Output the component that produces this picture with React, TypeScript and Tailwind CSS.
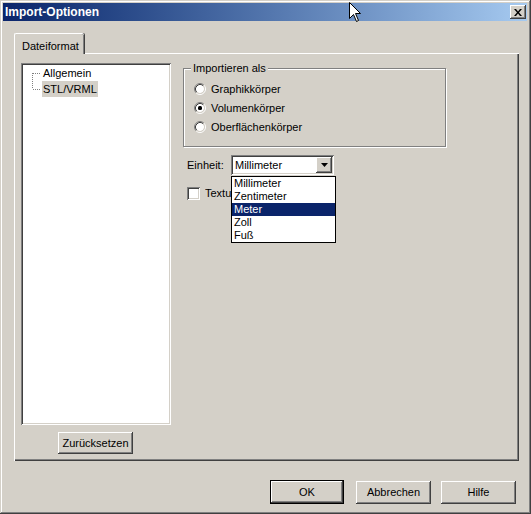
import React from 'react'

const raised =
  'shadow-[inset_-1px_-1px_#404040,inset_1px_1px_#ffffff,inset_-2px_-2px_#808080,inset_2px_2px_#d4d0c8]'
const sunken =
  'shadow-[inset_1px_1px_#808080,inset_-1px_-1px_#ffffff,inset_2px_2px_#404040,inset_-2px_-2px_#d4d0c8]'

function Radio({ checked }: { checked?: boolean }) {
  return (
    <svg width="12" height="12" viewBox="0 0 12 12" className="shrink-0">
      <circle cx="6" cy="6" r="4" fill="#ffffff" />
      <path d="M2.11 9.89 A5.5 5.5 0 0 1 9.89 2.11" stroke="#808080" fill="none" />
      <path d="M9.89 2.11 A5.5 5.5 0 0 1 2.11 9.89" stroke="#ffffff" fill="none" />
      <path d="M2.82 9.18 A4.5 4.5 0 0 1 9.18 2.82" stroke="#404040" fill="none" />
      <path d="M9.18 2.82 A4.5 4.5 0 0 1 2.82 9.18" stroke="#d4d0c8" fill="none" />
      {checked && <rect x="4" y="4" width="4" height="4" rx="1.5" fill="#000000" />}
    </svg>
  )
}

function Button({ label, isDefault, className = '' }: { label: string; isDefault?: boolean; className?: string }) {
  return (
    <div className={`${isDefault ? 'border border-black' : ''} ${className}`}>
      <div className={`h-full w-full flex items-center justify-center bg-[#d4d0c8] ${raised}`}>{label}</div>
    </div>
  )
}

const units = ['Millimeter', 'Zentimeter', 'Meter', 'Zoll', 'Fuß']

export default function App() {
  return (
    <div
      className={`relative w-[531px] h-[514px] bg-[#d4d0c8] pl-[3px] pt-[3px] pr-[4px] pb-[3px] flex flex-col text-[11px] text-black font-['Liberation_Sans',Arial,sans-serif] shadow-[inset_-1px_-1px_#404040,inset_1px_1px_#d4d0c8,inset_-2px_-2px_#808080,inset_2px_2px_#ffffff]`}
    >
      {/* title bar */}
      <div className="h-[18px] flex items-center justify-between bg-gradient-to-r from-[#0a246a] to-[#a6caf0] pl-[2px] pr-[1px]">
        <span className="text-white font-bold text-[12px] leading-none">Import-Optionen</span>
        <div className={`w-[16px] h-[14px] bg-[#d4d0c8] flex items-center justify-center ${raised}`}>
          <svg width="8" height="7" viewBox="0 0 8 7">
            <path d="M0 0h2l2 2.5L6 0h2L5 3.5 8 7H6L4 4.5 2 7H0l3-3.5z" fill="#000000" />
          </svg>
        </div>
      </div>

      {/* tab */}
      <div className="ml-[11px] mt-[12px] flex">
        <div className="relative z-10 -mb-[1px] w-[70px] h-[21px] bg-[#d4d0c8] rounded-t-[2px] border-l border-t border-white shadow-[inset_-1px_0_#808080,1px_0_#404040] pl-[7px] pt-[4px]">
          Dateiformat
        </div>
      </div>

      {/* panel */}
      <div className="ml-[11px] w-[505px] h-[408px] flex shadow-[inset_1px_1px_#ffffff,inset_-1px_-1px_#404040,inset_-2px_-2px_#808080]">
        <div className="pl-[7px] pt-[10px] flex flex-col">
          <div className={`w-[150px] h-[362px] bg-white pt-[2px] pl-[11px] flex ${sunken}`}>
            <svg width="9" height="32" viewBox="0 0 9 32" className="shrink-0">
              <path d="M0.5 8 V24" stroke="#808080" strokeDasharray="1 1" />
              <path d="M1 8.5 H9 M1 24.5 H9" stroke="#808080" strokeDasharray="1 1" />
            </svg>
            <div className="flex flex-col ml-[1px]">
              <div className="h-[16px] leading-[16px] px-[1px]">Allgemein</div>
              <div className="h-[16px] leading-[16px] px-[1px] bg-[#d4d0c8]">STL/VRML</div>
            </div>
          </div>
          <Button label="Zurücksetzen" className="mt-[7px] ml-[37px] w-[75px] h-[22px]" />
        </div>

        <div className="ml-[12px] pt-[9px] flex flex-col">
          {/* group box */}
          <div className="relative mt-[6px] w-[263px] h-[79px] border border-[#808080] shadow-[inset_1px_1px_#ffffff,1px_1px_#ffffff] pl-[10px] pt-[14px] flex flex-col gap-[7px]">
            <span className="absolute -top-[7px] left-[7px] bg-[#d4d0c8] px-[2px] leading-[12px]">Importieren als</span>
            <div className="flex items-center gap-[5px] h-[12px]">
              <Radio />
              <span>Graphikkörper</span>
            </div>
            <div className="flex items-center gap-[5px] h-[12px]">
              <Radio checked />
              <span>Volumenkörper</span>
            </div>
            <div className="flex items-center gap-[5px] h-[12px]">
              <Radio />
              <span>Oberflächenkörper</span>
            </div>
          </div>

          {/* Einheit */}
          <div className="mt-[8px] ml-[4px] flex items-center">
            <span className="w-[44px]">Einheit:</span>
            <div className="relative">
              <div className={`w-[103px] h-[20px] bg-white flex items-center justify-between pl-[4px] pr-[2px] ${sunken}`}>
                <span>Millimeter</span>
                <div className={`w-[16px] h-[16px] bg-[#d4d0c8] flex items-center justify-center ${raised}`}>
                  <svg width="7" height="4" viewBox="0 0 7 4">
                    <path d="M0 0h7L3.5 4z" fill="#000000" />
                  </svg>
                </div>
              </div>
              <div className="absolute z-20 top-[21px] left-0 w-[105px] border border-black bg-white">
                {units.map((u) => (
                  <div
                    key={u}
                    className={`h-[13px] leading-[13px] pl-[2px] ${u === 'Meter' ? 'bg-[#0a246a] text-white' : ''}`}
                  >
                    {u}
                  </div>
                ))}
              </div>
            </div>
          </div>

          <div className="mt-[10px] ml-[4px] flex items-center gap-[5px]">
            <div className={`w-[13px] h-[13px] bg-white shrink-0 ${sunken}`} />
            {/* label is hidden behind the open list; only its start shows */}
            <span className="w-[26px] overflow-hidden whitespace-nowrap">Texturen übernehmen</span>
          </div>
        </div>
      </div>

      {/* bottom buttons */}
      <div className="mt-[19px] pr-[11px] flex justify-end">
        <Button label="OK" isDefault className="w-[74px] h-[24px]" />
        <Button label="Abbrechen" className="ml-[12px] w-[75px] h-[23px] mt-[1px]" />
        <Button label="Hilfe" className="ml-[10px] w-[75px] h-[23px] mt-[1px]" />
      </div>

      {/* mouse cursor */}
      <svg className="absolute left-[349px] top-[2px]" width="13" height="21" viewBox="0 0 13 21">
        <path d="M0.5 0.5 V16.5 L4.5 12.5 L7.5 19.5 L9.5 18.5 L6.5 11.5 H11.5 Z" fill="#ffffff" stroke="#000000" />
      </svg>
    </div>
  )
}
